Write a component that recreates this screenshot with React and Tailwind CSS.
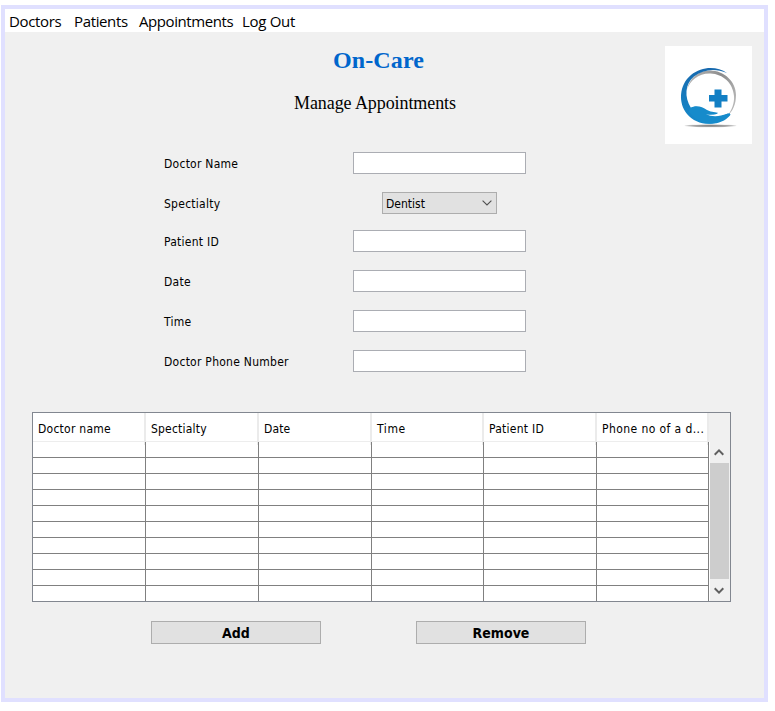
const UI_FONT = "font-['DejaVu_Sans_Condensed','DejaVu_Sans',sans-serif]";

const menus = [
  { label: "Doctors", box: "w-[65px] tracking-[-0.34px]" },
  { label: "Patients", box: "w-[65px] tracking-[-0.36px]" },
  { label: "Appointments", box: "w-[103px] tracking-[-0.42px]" },
  { label: "Log Out", box: "w-[60px] tracking-[-0.3px]" },
];

const fields = [
  { label: "Doctor Name", row: "mb-[18px]" },
  { label: "Spectialty", row: "mb-4", select: "Dentist" },
  { label: "Patient ID", row: "mb-[18px]" },
  { label: "Date", row: "mb-[18px]" },
  { label: "Time", row: "mb-[18px]" },
  { label: "Doctor Phone Number", row: "" },
];

const columns = [
  { label: "Doctor name", text: "tracking-[0.25px]" },
  { label: "Spectialty", text: "tracking-[0.2px]" },
  { label: "Date", text: "tracking-[0.1px]" },
  { label: "Time", text: "tracking-[0.6px]" },
  { label: "Patient ID", text: "tracking-[0.25px]" },
  { label: "Phone no of a d...", text: "tracking-[0.42px]" },
];
const GRID = "grid grid-cols-[113px_113px_113px_112px_113px_112px]";

function Logo() {
  return (
    <svg width="87" height="98" viewBox="0 0 87 98" className="block">
      <defs>
        <linearGradient id="ring" x1="0" y1="0" x2="0" y2="1">
          <stop offset="0" stopColor="#1769ae" />
          <stop offset="1" stopColor="#168bcb" />
        </linearGradient>
        <linearGradient id="silver" x1="0" y1="0" x2="1" y2="0.6">
          <stop offset="0" stopColor="#bdbdbd" />
          <stop offset="0.55" stopColor="#8c8c8c" />
          <stop offset="1" stopColor="#b5b5b5" />
        </linearGradient>
        <radialGradient id="shade">
          <stop offset="0" stopColor="#777" />
          <stop offset="0.7" stopColor="#aaa" />
          <stop offset="1" stopColor="#ddd" />
        </radialGradient>
      </defs>
      <rect width="87" height="98" fill="#fff" />
      <path d="M22 44C24 32 34 24.500 45 24.500C59 24.500 71 35.500 71 49C71 58 68 65 62 70.500C67 64 69.500 57 69 50C68 37 58 28 45.500 27.500C34 27 25 34 22 44Z" fill="url(#silver)" />
      <path d="M62 27C52 20 37 20 26 29C14 39 13 57 22 68C31 79 48 81 59 73C62 71 64 69 65 67.500L54 69C47 69 44 68 40 64C34 60 30 60 26 62C19 51 20 38 29 30.500C38 23.500 50 22 62 27Z" fill="url(#ring)" />
      <path d="M25 62C31 58.500 37 60.500 42 64C47 66.500 51 66 53.500 67C52 69 46 69 42 68.500C48 71 56 70 61 68C64 67 66.500 67.500 65 69.500C60 75.500 51 78.500 43 77.500C34 76 28 71 24 66Z" fill="#168bcb" />
      <path d="M53.500 67C51 69 46 69.200 41 68.300C47 71.200 56 70.300 61 68L65 65.500L58 65Z" fill="#fff" />
      <path d="M49.500 43.500H56.500V49H62.500V55.500H56.500V61.500H49.500V55.500H44V49H49.500Z" fill="#127fc4" />
      <ellipse cx="45.500" cy="79.800" rx="26" ry="1.500" fill="url(#shade)" />
    </svg>
  );
}

function Arrow({ up }) {
  return (
    <svg width="10" height="7" viewBox="0 0 10 7" fill="none" stroke="#606060" strokeWidth="2">
      <path d={up ? "M0.700 5.700L5 1.400L9.300 5.700" : "M0.700 1.300L5 5.600L9.300 1.300"} />
    </svg>
  );
}

function Field({ label, row, select }) {
  return (
    <div className={`flex h-[22px] items-center ${row}`}>
      <label className="w-[189px] pt-[2px] text-[12px] leading-[22px] tracking-[0.26px]">{label}</label>
      {select ? (
        <div className="ml-[29px] flex h-[22px] w-[115px] items-center justify-between border border-[#adadad] bg-[#e1e1e1] pl-[3px] pr-[4px] text-[12px]">
          <span className="pt-[2px]">{select}</span>
          <svg width="10" height="6" viewBox="0 0 10 6" fill="none" stroke="#505050" strokeWidth="1.1">
            <path d="M0.600 0.600L5 5L9.400 0.600" />
          </svg>
        </div>
      ) : (
        <div className="h-[22px] w-[173px] border border-[#abadb3] bg-white" />
      )}
    </div>
  );
}

export default function App() {
  return (
    <div className="h-[711px] w-[775px] bg-white pl-px pt-[5px] text-black">
      <div className={`h-[697px] w-[767px] border-4 border-[#e0e0ff] bg-[#f0f0f0] ${UI_FONT}`}>
        <nav className="flex h-[23px] items-center whitespace-nowrap bg-white pl-1 pt-px font-['Open_Sans',sans-serif] text-[15px] leading-5">
          {menus.map((m) => (
            <span key={m.label} className={m.box}>{m.label}</span>
          ))}
        </nav>

        <header className="flex h-[120px] pt-[14px] font-['Liberation_Serif',serif]">
          <div className="w-[660px]">
            <h1 className="pl-[328px] text-2xl font-bold leading-7 tracking-[0.12px] text-[#0066cc]">On-Care</h1>
            <p className="mt-[17px] pl-[289px] text-[18px] leading-6 tracking-[-0.08px]">Manage Appointments</p>
          </div>
          <Logo />
        </header>

        <form className="pl-[159px]">
          {fields.map((f) => (
            <Field key={f.label} {...f} />
          ))}
        </form>

        <section className="ml-[27px] mt-10 flex h-[190px] w-[699px] border border-[#828790]">
          <div className="w-[676px]">
            <div className={`${GRID} h-[29px] border-b border-[#ededed] bg-white text-[12px] leading-8`}>
              {columns.map((c) => (
                <span key={c.label} className={`whitespace-nowrap border-r-2 border-[#ebebeb] pl-[5px] ${c.text}`}>{c.label}</span>
              ))}
            </div>
            {Array.from({ length: 10 }, (_, r) => (
              <div key={r} className={`${GRID} h-4 border-b border-[#808080] bg-white last:h-[15px] last:border-b-0`}>
                {columns.map((c) => (
                  <span key={c.label} className="border-r border-[#808080]" />
                ))}
              </div>
            ))}
          </div>
          <div className="mt-[29px] flex h-[159px] w-[21px] flex-col border-l border-white">
            <div className="flex h-[21px] w-[18px] items-center justify-center"><Arrow up /></div>
            <div className="h-[116px] w-[19px] bg-[#cdcdcd]" />
            <div className="flex h-[22px] w-[18px] items-center justify-center"><Arrow /></div>
          </div>
        </section>

        <div className="ml-[146px] mt-[19px] flex gap-[95px]">
          <button type="button" className="h-[23px] w-[170px] border border-[#adadad] bg-[#e1e1e1] pt-px text-[14px] font-bold leading-[21px]">Add</button>
          <button type="button" className="h-[23px] w-[170px] border border-[#adadad] bg-[#e1e1e1] pt-px text-[14px] font-bold leading-[21px]">Remove</button>
        </div>
      </div>
    </div>
  );
}
